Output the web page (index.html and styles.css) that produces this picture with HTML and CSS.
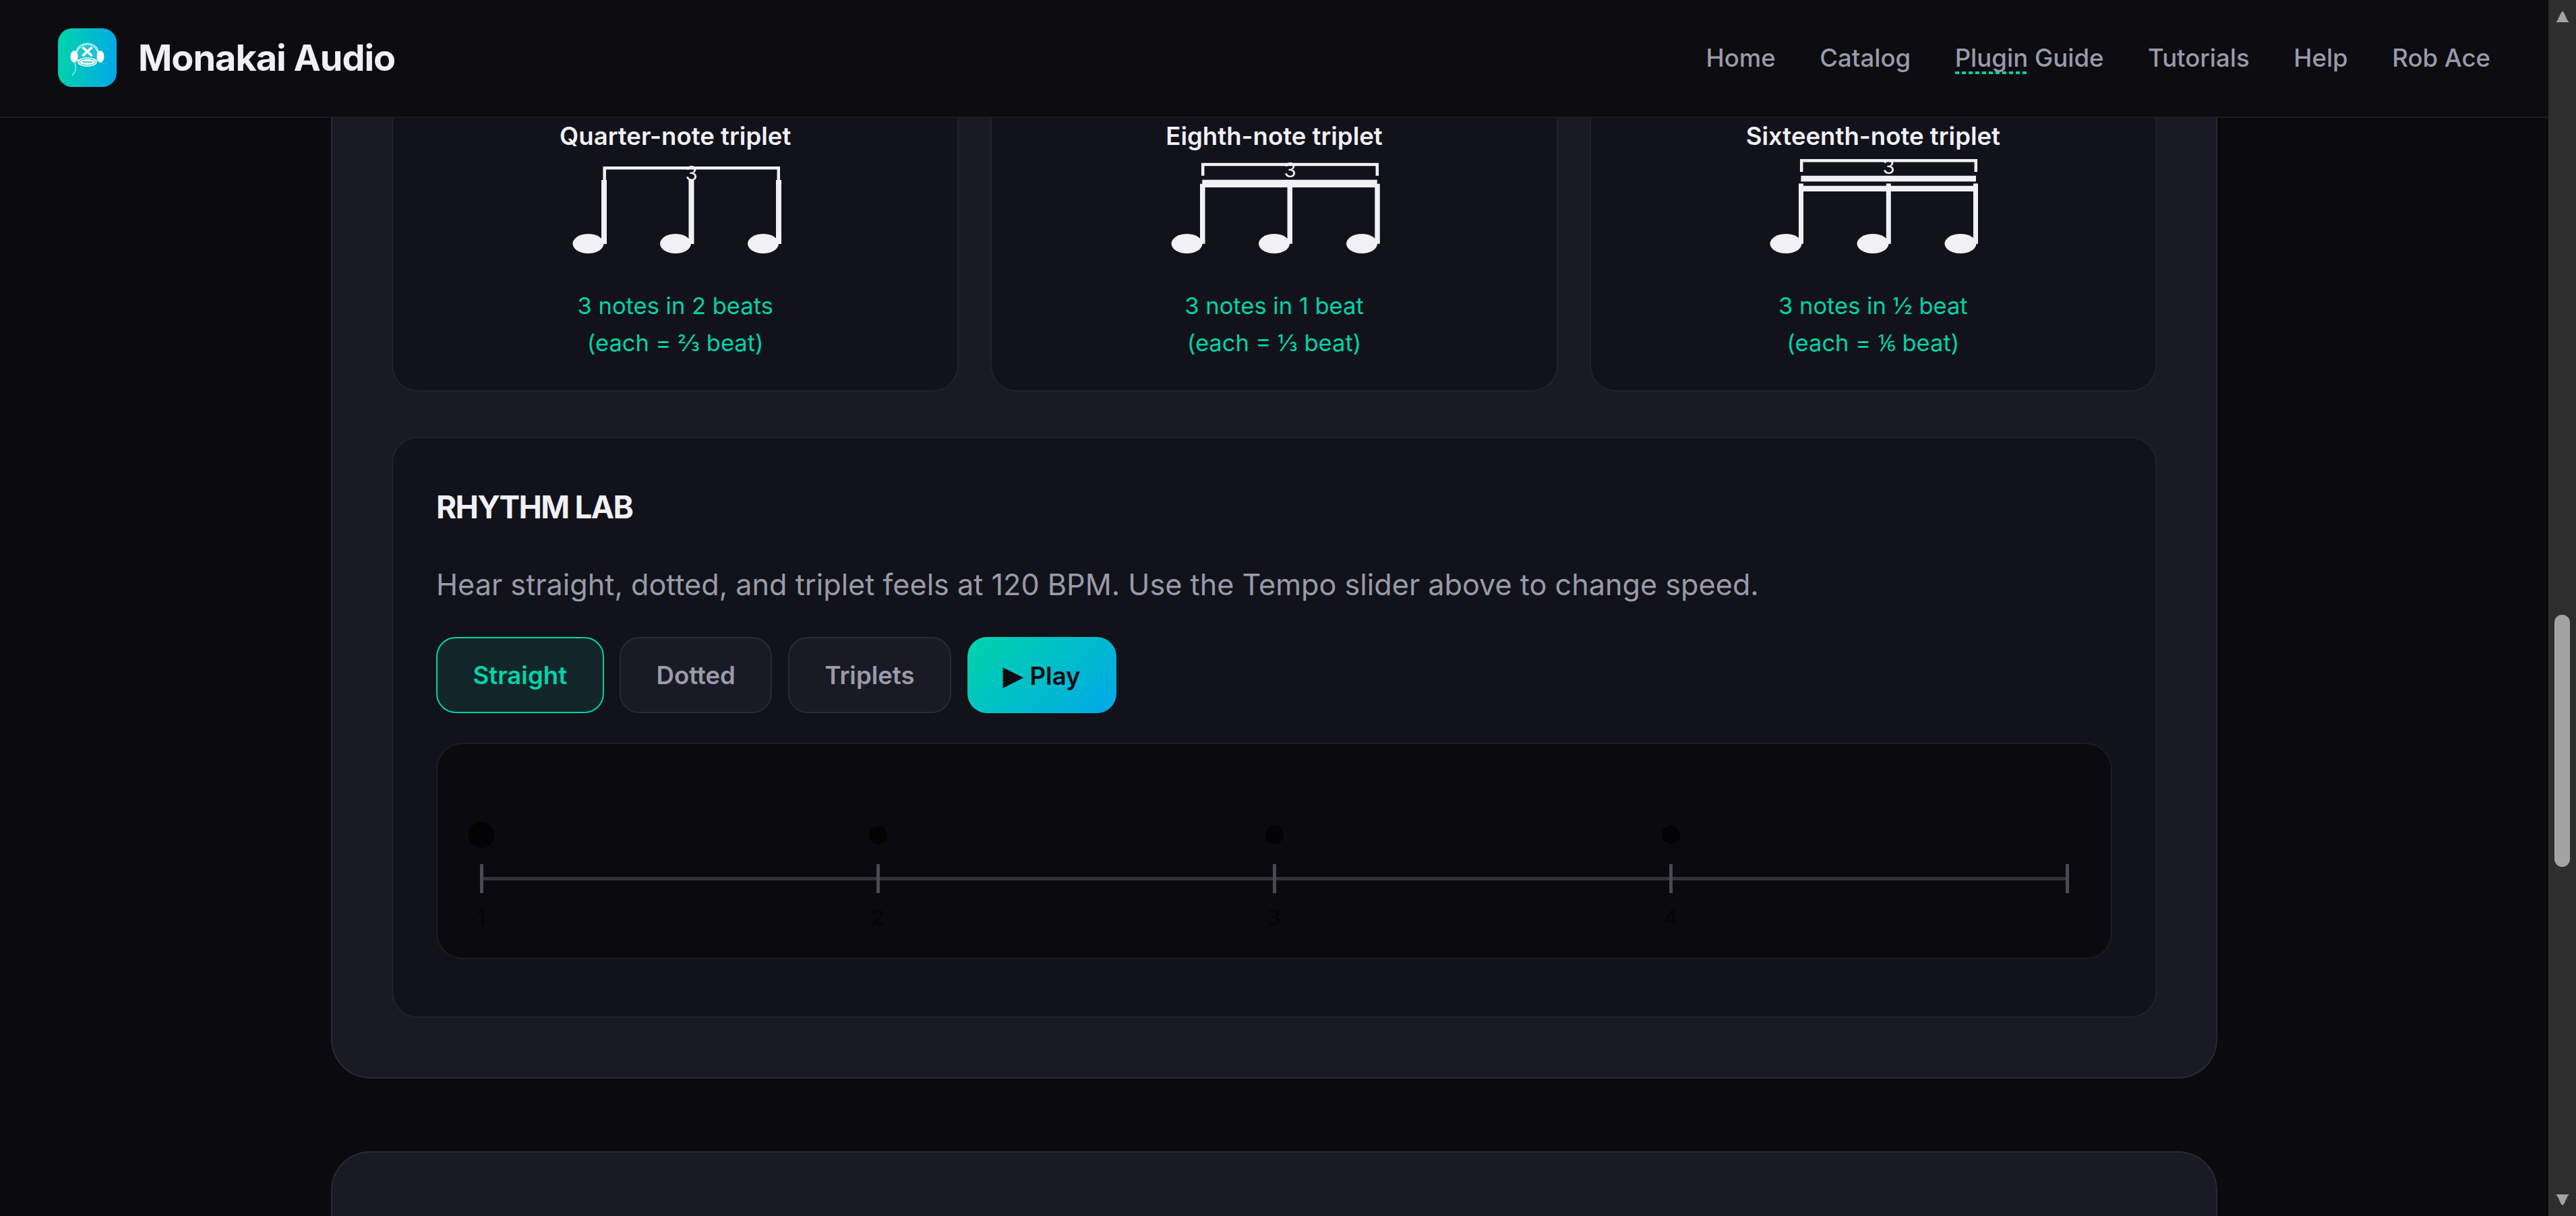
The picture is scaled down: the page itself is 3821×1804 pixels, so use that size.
FILE: index.html
```html
<!DOCTYPE html>
<html lang="en">

<head>
    <meta charset="UTF-8">
    <meta name="viewport" content="width=device-width, initial-scale=1.0">
    <title>Monakai Audio</title>
    <link rel="stylesheet" href="styles.css">
</head>

<body>
    <div class="window">
        <header class="topbar">
            <a class="brand" href="#">
                <span class="brand-logo">
                    <svg width="87" height="87" viewBox="0 0 87 87">
                        <path d="M27 36C28 18 59 18 60 36" fill="none" stroke="#fff" stroke-width="1.2"/>
                        <ellipse cx="24" cy="42" rx="5.5" ry="9" fill="#fff"/>
                        <ellipse cx="63" cy="42" rx="5.5" ry="9" fill="#fff"/>
                        <circle cx="43.5" cy="40" r="16" fill="#fff" fill-opacity=".12" stroke="#fff" stroke-width="1.2"/>
                        <path d="M36.5 28L50.5 41M50.5 28L36.5 41" stroke="#fff" stroke-width="3.6"/>
                        <ellipse cx="43.5" cy="50" rx="14.5" ry="6.8" fill="#fff"/>
                        <ellipse cx="43.5" cy="50" rx="11.8" ry="4.8" fill="#fff" stroke="#12bcc4" stroke-width="1"/>
                        <rect x="36" y="49.3" width="15" height="1.6" fill="#12bcc4"/>
                        <path d="M25 51C27 60 26 63 24 66L21 70" fill="none" stroke="#fff" stroke-width="1"/>
                    </svg>
                </span>
                <span class="brand-name">Monakai Audio</span>
            </a>
            <nav class="nav">
                <a href="#">Home</a>
                <a href="#">Catalog</a>
                <a href="#"><span class="spell">Plugin</span> Guide</a>
                <a href="#">Tutorials</a>
                <a href="#">Help</a>
                <a href="#">Rob Ace</a>
            </nav>
        </header>

        <main class="content">
            <section class="panel">
                <div class="triplets">
                    <div class="triplet">
                        <h4>Quarter-note triplet</h4>
                        <svg class="notation" width="340" height="155" viewBox="0 -10 340 155">
                            <path class="bracket" d="M64.7 32V14.2H322.8V32"/>
                            <text x="193.5" y="33">3</text>
                            <rect x="60" y="32" width="8" height="95"/>
                            <rect x="189.5" y="32" width="8" height="95"/>
                            <rect x="319" y="32" width="8" height="95"/>
                            <ellipse cx="40.5" cy="126.5" rx="23" ry="14.5"/>
                            <ellipse cx="170" cy="126.5" rx="23" ry="14.5"/>
                            <ellipse cx="300" cy="126.5" rx="23" ry="14.5"/>
                        </svg>
                        <p>3 notes in 2 beats<br>(each = ⅔ beat)</p>
                    </div>
                    <div class="triplet">
                        <h4>Eighth-note triplet</h4>
                        <svg class="notation" width="340" height="155" viewBox="0 -10 340 155">
                            <path class="bracket" d="M64.2 25.7V9H322.8V25.7"/>
                            <text x="193.5" y="28">3</text>
                            <rect x="63.3" y="31.7" width="259.4" height="11.3"/>
                            <rect x="60" y="37.7" width="7.5" height="89"/>
                            <rect x="189.5" y="37.7" width="7.5" height="89"/>
                            <rect x="319.3" y="37.7" width="7.5" height="89"/>
                            <ellipse cx="40.5" cy="126.5" rx="23" ry="14.5"/>
                            <ellipse cx="170" cy="126.5" rx="23" ry="14.5"/>
                            <ellipse cx="300" cy="126.5" rx="23" ry="14.5"/>
                        </svg>
                        <p>3 notes in 1 beat<br>(each = ⅓ beat)</p>
                    </div>
                    <div class="triplet">
                        <h4>Sixteenth-note triplet</h4>
                        <svg class="notation" width="340" height="155" viewBox="0 -10 340 155">
                            <path class="bracket" d="M64.2 20V3.2H322.8V20"/>
                            <text x="193.5" y="23">3</text>
                            <rect x="63.4" y="25.7" width="259.6" height="8.6"/>
                            <rect x="63.4" y="40.7" width="259.6" height="8.3"/>
                            <rect x="60" y="37.3" width="7" height="89.5"/>
                            <rect x="189.8" y="37.3" width="7" height="89.5"/>
                            <rect x="319" y="37.3" width="7" height="89.5"/>
                            <ellipse cx="41" cy="126.5" rx="23.5" ry="14.5"/>
                            <ellipse cx="170" cy="126.5" rx="23.5" ry="14.5"/>
                            <ellipse cx="300" cy="126.5" rx="23.5" ry="14.5"/>
                        </svg>
                        <p>3 notes in ½ beat<br>(each = <span class="frac">⅙</span> beat)</p>
                    </div>
                </div>

                <div class="lab">
                    <h3>RHYTHM LAB</h3>
                    <p class="lab-text">Hear straight, dotted, and triplet feels at 120 BPM. Use the Tempo slider above to change speed.</p>
                    <div class="lab-btns">
                        <button class="btn active">Straight</button>
                        <button class="btn">Dotted</button>
                        <button class="btn">Triplets</button>
                        <button class="btn play"><span class="play-icon">▶</span> Play</button>
                    </div>
                    <div class="timeline">
                        <div class="track">
                            <div class="line"></div>
                            <div class="tick" style="left: 0%"></div>
                            <div class="tick" style="left: 25%"></div>
                            <div class="tick" style="left: 50%"></div>
                            <div class="tick" style="left: 75%"></div>
                            <div class="tick" style="left: 100%"></div>
                            <div class="dot big" style="left: 0%"></div>
                            <div class="dot" style="left: 25%"></div>
                            <div class="dot" style="left: 50%"></div>
                            <div class="dot" style="left: 75%"></div>
                            <span class="num" style="left: 0%">1</span>
                            <span class="num" style="left: 25%">2</span>
                            <span class="num" style="left: 50%">3</span>
                            <span class="num" style="left: 75%">4</span>
                        </div>
                    </div>
                </div>
            </section>

            <section class="panel next"></section>
        </main>
    </div>

    <aside class="scrollbar">
        <svg class="arrow-up" width="20" height="16" viewBox="0 0 20 16"><path d="M0 16C4 14 7 0 10 0S16 14 20 16Z"/></svg>
        <div class="thumb"></div>
        <svg class="arrow-down" width="20" height="16" viewBox="0 0 20 16"><path d="M0 0C4 2 7 16 10 16S16 2 20 0Z"/></svg>
    </aside>
</body>

</html>
```

FILE: styles.css
```css
* {
    margin: 0;
    padding: 0;
    box-sizing: border-box;
}

body {
    display: flex;
    height: 1804px;
    overflow: hidden;
    background: #0a0a0f;
    color: #f0f0f5;
    font-family: "Inter", "Liberation Sans", sans-serif;
}

a {
    color: inherit;
    text-decoration: none;
}

.window {
    flex: 1;
    min-width: 0;
    display: flex;
    flex-direction: column;
}

/* top bar */
.topbar {
    flex: none;
    height: 175px;
    display: flex;
    align-items: center;
    justify-content: space-between;
    padding: 0 86px 2px 86px;
    background: #0c0c11;
    border-bottom: 2px solid #1c1c24;
}

.brand {
    display: flex;
    align-items: center;
    gap: 32px;
}

.brand-logo {
    width: 87px;
    height: 87px;
    border-radius: 21px;
    background: linear-gradient(95deg, #00d4aa, #00a8e8);
}

.brand-logo svg {
    display: block;
}

.brand-name {
    font-size: 54px;
    font-weight: 700;
    letter-spacing: -1px;
    color: #f0f0f5;
}

.nav {
    display: flex;
    gap: 65.5px;
    font-size: 36.56px;
    font-weight: 500;
    color: #9a9aaa;
}

.spell {
    background: repeating-linear-gradient(90deg, #00d4aa 0 6px, transparent 6px 10px) left bottom / 100% 4px no-repeat;
    padding-bottom: 2px;
}

/* content */
.content {
    flex: 1;
    min-height: 0;
    overflow: hidden;
    width: 2798px;
    margin: 0 auto;
}

.panel {
    padding: 0 88px 88px;
    background: #1a1a24;
    border: 2px solid #2a2a35;
    border-top: 0;
    border-radius: 0 0 58px 58px;
}

.panel.next {
    height: 300px;
    margin-top: 108px;
    border-top: 2px solid #2a2a35;
    border-radius: 58px 58px 0 0;
}

.triplets {
    display: grid;
    grid-template-columns: repeat(3, 1fr);
    gap: 47px;
    margin-bottom: 67px;
}

.triplet {
    height: 406px;
    padding-top: 7px;
    display: flex;
    flex-direction: column;
    align-items: center;
    background: #12121a;
    border: 2px solid #22222c;
    border-top: 0;
    border-radius: 0 0 39px 39px;
}

.triplet h4 {
    font-size: 36.56px;
    line-height: 40px;
    font-weight: 600;
}

.notation {
    display: block;
    margin-top: 3px;
    fill: #f0f0f5;
}

.notation .bracket {
    fill: none;
    stroke: #f0f0f5;
    stroke-width: 4.5;
}

.notation text {
    font-size: 29.25px;
    text-anchor: middle;
}

.triplet p {
    margin-top: 47px;
    font-size: 34.5px;
    line-height: 54.6px;
    text-align: center;
    color: #00d4aa;
}

.frac {
    font-family: "Liberation Serif", serif;
}

/* rhythm lab */
.lab {
    padding: 79px 64px 85px;
    background: #12121a;
    border: 2px solid #22222c;
    border-radius: 39px;
}

.lab h3 {
    font-size: 46px;
    line-height: 46px;
    font-weight: 700;
    letter-spacing: -1.7px;
}

.lab-text {
    margin-top: 62px;
    font-size: 43.2px;
    line-height: 60px;
    color: #9a9aaa;
}

.lab-btns {
    display: flex;
    gap: 23.5px;
    margin-top: 48px;
}

.btn {
    height: 113px;
    padding: 0 52.5px;
    font-family: inherit;
    font-size: 36.56px;
    font-weight: 600;
    color: #9a9aaa;
    background: #1a1a24;
    border: 2px solid #2a2a35;
    border-radius: 29px;
}

.btn.active {
    color: #00d4aa;
    background: #12262a;
    border-color: #00d4aa;
}

.btn.play {
    padding: 0 53px;
    color: #0a0a0f;
    background: linear-gradient(135deg, #00d4aa, #00a8e8);
    border: 0;
}

.play-icon {
    font-family: "DejaVu Sans", sans-serif;
    font-size: 40px;
    font-weight: 400;
}

.timeline {
    height: 321px;
    margin-top: 44px;
    padding: 0 65px;
    background: #0a0a0f;
    border: 2px solid #1c1c24;
    border-radius: 39px;
}

.track {
    position: relative;
    height: 100%;
}

.line {
    position: absolute;
    top: 197px;
    left: 0;
    right: 0;
    height: 5px;
    background: #32323a;
}

.tick {
    position: absolute;
    top: 178px;
    width: 5px;
    height: 43px;
    margin-left: -2px;
    background: #4a4a52;
}

.dot {
    position: absolute;
    top: 121px;
    width: 27px;
    height: 27px;
    margin-left: -13px;
    border-radius: 50%;
    background: #030304;
}

.dot.big {
    top: 116px;
    width: 38px;
    height: 38px;
    margin-left: -19px;
}

.num {
    position: absolute;
    top: 240px;
    width: 60px;
    margin-left: -30px;
    font-size: 33px;
    line-height: 34px;
    text-align: center;
    color: #050507;
}

/* scrollbar */
.scrollbar {
    flex: none;
    width: 41px;
    display: flex;
    flex-direction: column;
    align-items: center;
    padding: 17px 0 16px;
    background: #2e2e2e;
    fill: #a3a3a3;
}

.thumb {
    width: 23px;
    height: 374px;
    margin-top: 879px;
    border-radius: 12px;
    background: #a3a3a3;
}

.arrow-down {
    margin-top: auto;
}
```
